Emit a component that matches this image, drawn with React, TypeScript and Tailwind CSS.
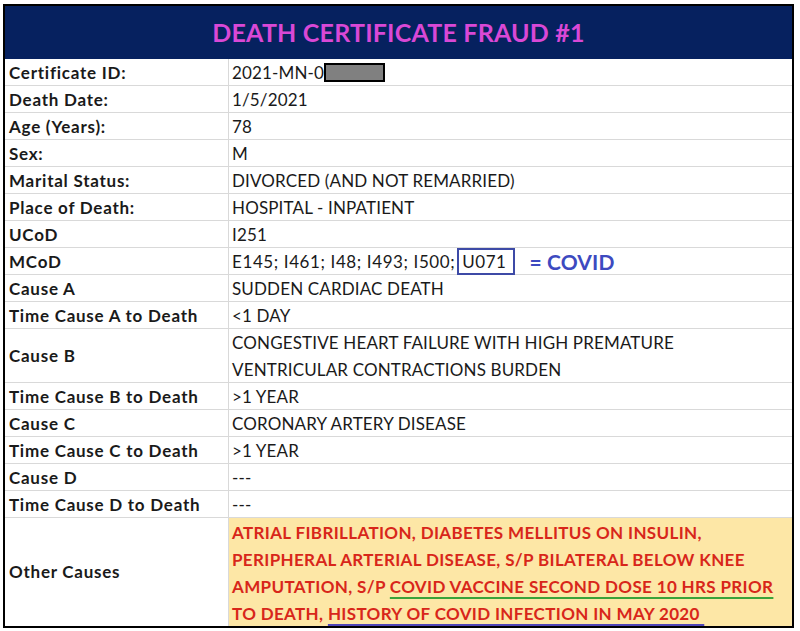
import type { ReactNode } from "react";

type Row = {
  label: string;
  value: ReactNode;
  h?: string;
};

const Redacted = () => (
  <span className="inline-block w-[61px] h-[19px] bg-[#808080] border-2 border-black align-[-3px]" />
);

const rows: Row[] = [
  { label: "Certificate ID:", value: <span>2021-MN-0<Redacted /></span> },
  { label: "Death Date:", value: "1/5/2021" },
  { label: "Age (Years):", value: "78" },
  { label: "Sex:", value: "M" },
  { label: "Marital Status:", value: "DIVORCED (AND NOT REMARRIED)" },
  { label: "Place of Death:", value: "HOSPITAL - INPATIENT" },
  { label: "UCoD", value: "I251" },
  {
    label: "MCoD",
    value: (
      <span className="flex items-center">
        <span className="tracking-[0.6px]">E145; I461; I48; I493; I500;</span>
        <span className="ml-[2px] pl-[3px] pr-[7px] h-[27px] leading-[23px] tracking-[0.5px] border-2 border-[#3d4aa6]">U071</span>
        <span className="ml-[14px] font-bold text-[21px] text-[#3d4ac0]">= COVID</span>
      </span>
    ),
  },
  { label: "Cause A", value: "SUDDEN CARDIAC DEATH" },
  { label: "Time Cause A to Death", value: "<1 DAY" },
  {
    label: "Cause B",
    value: (
      <span>
        CONGESTIVE HEART FAILURE WITH HIGH PREMATURE
        <br />
        VENTRICULAR CONTRACTIONS BURDEN
      </span>
    ),
    h: "h-[54px]",
  },
  { label: "Time Cause B to Death", value: ">1 YEAR" },
  { label: "Cause C", value: "CORONARY ARTERY DISEASE" },
  { label: "Time Cause C to Death", value: ">1 YEAR" },
  { label: "Cause D", value: "---" },
  { label: "Time Cause D to Death", value: "---" },
];

const App = () => {
  return (
    <div className="w-[800px] h-[631px] bg-white pt-[4px] pl-[3px] font-['Lato','Noto_Sans',sans-serif] text-[17px] text-[#1a1a1a]">
      <div className="w-[791px] border-2 border-black">
        <div className="h-[53px] bg-[#06215f] flex items-center justify-center">
          <h1 className="text-[25px] font-bold text-[#d948d6] tracking-[0.2px]">DEATH CERTIFICATE FRAUD #1</h1>
        </div>
        {rows.map((row, i) => (
          <div key={i} className={`flex border-b border-[#d9d9d9] ${row.h ?? "h-[27px]"}`}>
            <div className="w-[224px] shrink-0 border-r border-[#d9d9d9] pl-[4px] flex items-center font-bold tracking-[0.75px] leading-[27px]">
              {row.label}
            </div>
            <div className="flex-1 pl-[3px] flex items-center tracking-[0.15px] leading-[27px]">{row.value}</div>
          </div>
        ))}
        <div className="flex h-[108px]">
          <div className="w-[224px] shrink-0 border-r border-[#d9d9d9] pl-[4px] flex items-center font-bold tracking-[0.75px]">
            Other Causes
          </div>
          <div className="flex-1 bg-[#fde7a6] pl-[3px] pt-[1px] font-bold text-[#d8261a] tracking-[0.35px] leading-[27px]">
            ATRIAL FIBRILLATION, DIABETES MELLITUS ON INSULIN,
            <br />
            PERIPHERAL ARTERIAL DISEASE, S/P BILATERAL BELOW KNEE
            <br />
            AMPUTATION, S/P{" "}
            <span className="underline decoration-[#3aa33a] decoration-2 underline-offset-[4px]">
              COVID VACCINE SECOND DOSE 10 HRS PRIOR
            </span>
            <br />
            TO DEATH,{" "}
            <span className="underline decoration-[#5046b8] decoration-2 underline-offset-[4px]">
              HISTORY OF COVID INFECTION IN MAY 2020&nbsp;
            </span>
          </div>
        </div>
      </div>
    </div>
  );
};

export default App;
